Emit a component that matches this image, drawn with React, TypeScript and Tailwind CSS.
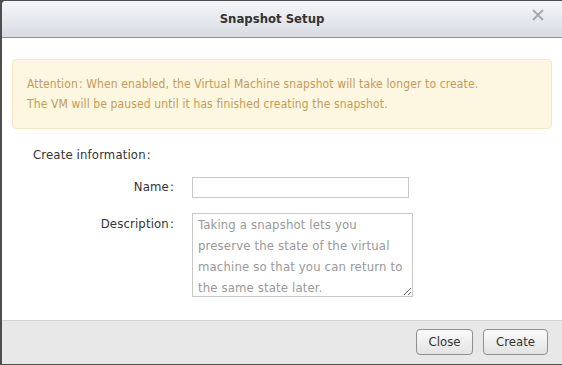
const font = '"DejaVu Sans Condensed", "DejaVu Sans", Tahoma, sans-serif';

const Label = ({ text }: { text: string }) => (
  <>
    {text}
    <span className="ml-[1px]">:</span>
  </>
);

const App = () => {
  return (
    <div
      className="w-[562px] h-[365px] bg-[#4d4d4d] pl-[2px] pt-[1px] overflow-hidden"
      style={{ fontFamily: font }}
    >
      <div className="w-[566px] h-[363px] bg-white rounded-tl-[4px] flex flex-col overflow-hidden">
        {/* Header */}
        <div className="relative h-[37px] shrink-0 bg-gradient-to-b from-[#f5f6f8] to-[#d7dce3] border-b border-[#8d939b] flex items-center justify-center">
          <span className="text-[13px] font-bold text-[#333] -ml-[26px]">Snapshot Setup</span>
          <svg
            className="absolute left-[530px] top-[8px]"
            width="12"
            height="12"
            viewBox="0 0 12 12"
          >
            <path d="M1 1 L11 11 M11 1 L1 11" stroke="#a5a9ae" strokeWidth="2" />
          </svg>
        </div>

        {/* Body */}
        <div className="flex-1 pt-[21px] pl-[10px]">
          <div className="w-[540px] h-[70px] rounded-[4px] border border-[#f6e7c3] bg-[#fdf6e1] px-[14px] pt-[14px] text-[12px] tracking-[0.12px] leading-[20px] text-[#c49b58]">
            <div>
              Attention<span className="ml-[1px]">:</span> When enabled, the Virtual Machine snapshot will take longer to create.
            </div>
            <div>The VM will be paused until it has finished creating the snapshot.</div>
          </div>

          <div className="pl-[21px] pt-[16px] text-[13px] tracking-[0.15px] text-[#333]">
            <Label text="Create information" />
          </div>

          <div className="mt-[12px] flex items-center">
            <div className="w-[162px] text-right text-[13px] tracking-[0.15px] text-[#333]">
              <Label text="Name" />
            </div>
            <input
              type="text"
              className="ml-[18px] w-[217px] h-[21px] border border-[#c8c8c8] bg-white outline-none"
            />
          </div>

          <div className="mt-[15px] flex items-start">
            <div className="w-[162px] text-right text-[13px] tracking-[0.15px] text-[#333] pt-[1px]">
              <Label text="Description" />
            </div>
            <textarea
              className="ml-[18px] w-[221px] h-[84px] border border-[#c8c8c8] bg-white pl-[5px] pr-[4px] pt-[0px] text-[13px] tracking-[0.15px] leading-[21px] text-[#999] outline-none resize"
              defaultValue="Taking a snapshot lets you preserve the state of the virtual machine so that you can return to the same state later."
              style={{ fontFamily: font }}
            />
          </div>
        </div>

        {/* Footer */}
        <div className="h-[44px] shrink-0 bg-[#e8e8e8] border-t border-[#d4d4d4] flex items-start pt-[8px] pl-[414px] gap-[10px]">
          <button className="w-[57px] h-[26px] rounded-[4px] border border-[#8f8f8f] bg-gradient-to-b from-[#fbfbfb] to-[#e3e3e3] text-[13px] text-[#333]">
            Close
          </button>
          <button className="w-[65px] h-[26px] rounded-[4px] border border-[#8f8f8f] bg-gradient-to-b from-[#fbfbfb] to-[#e3e3e3] text-[13px] text-[#333]">
            Create
          </button>
        </div>
      </div>
    </div>
  );
};

export default App;
